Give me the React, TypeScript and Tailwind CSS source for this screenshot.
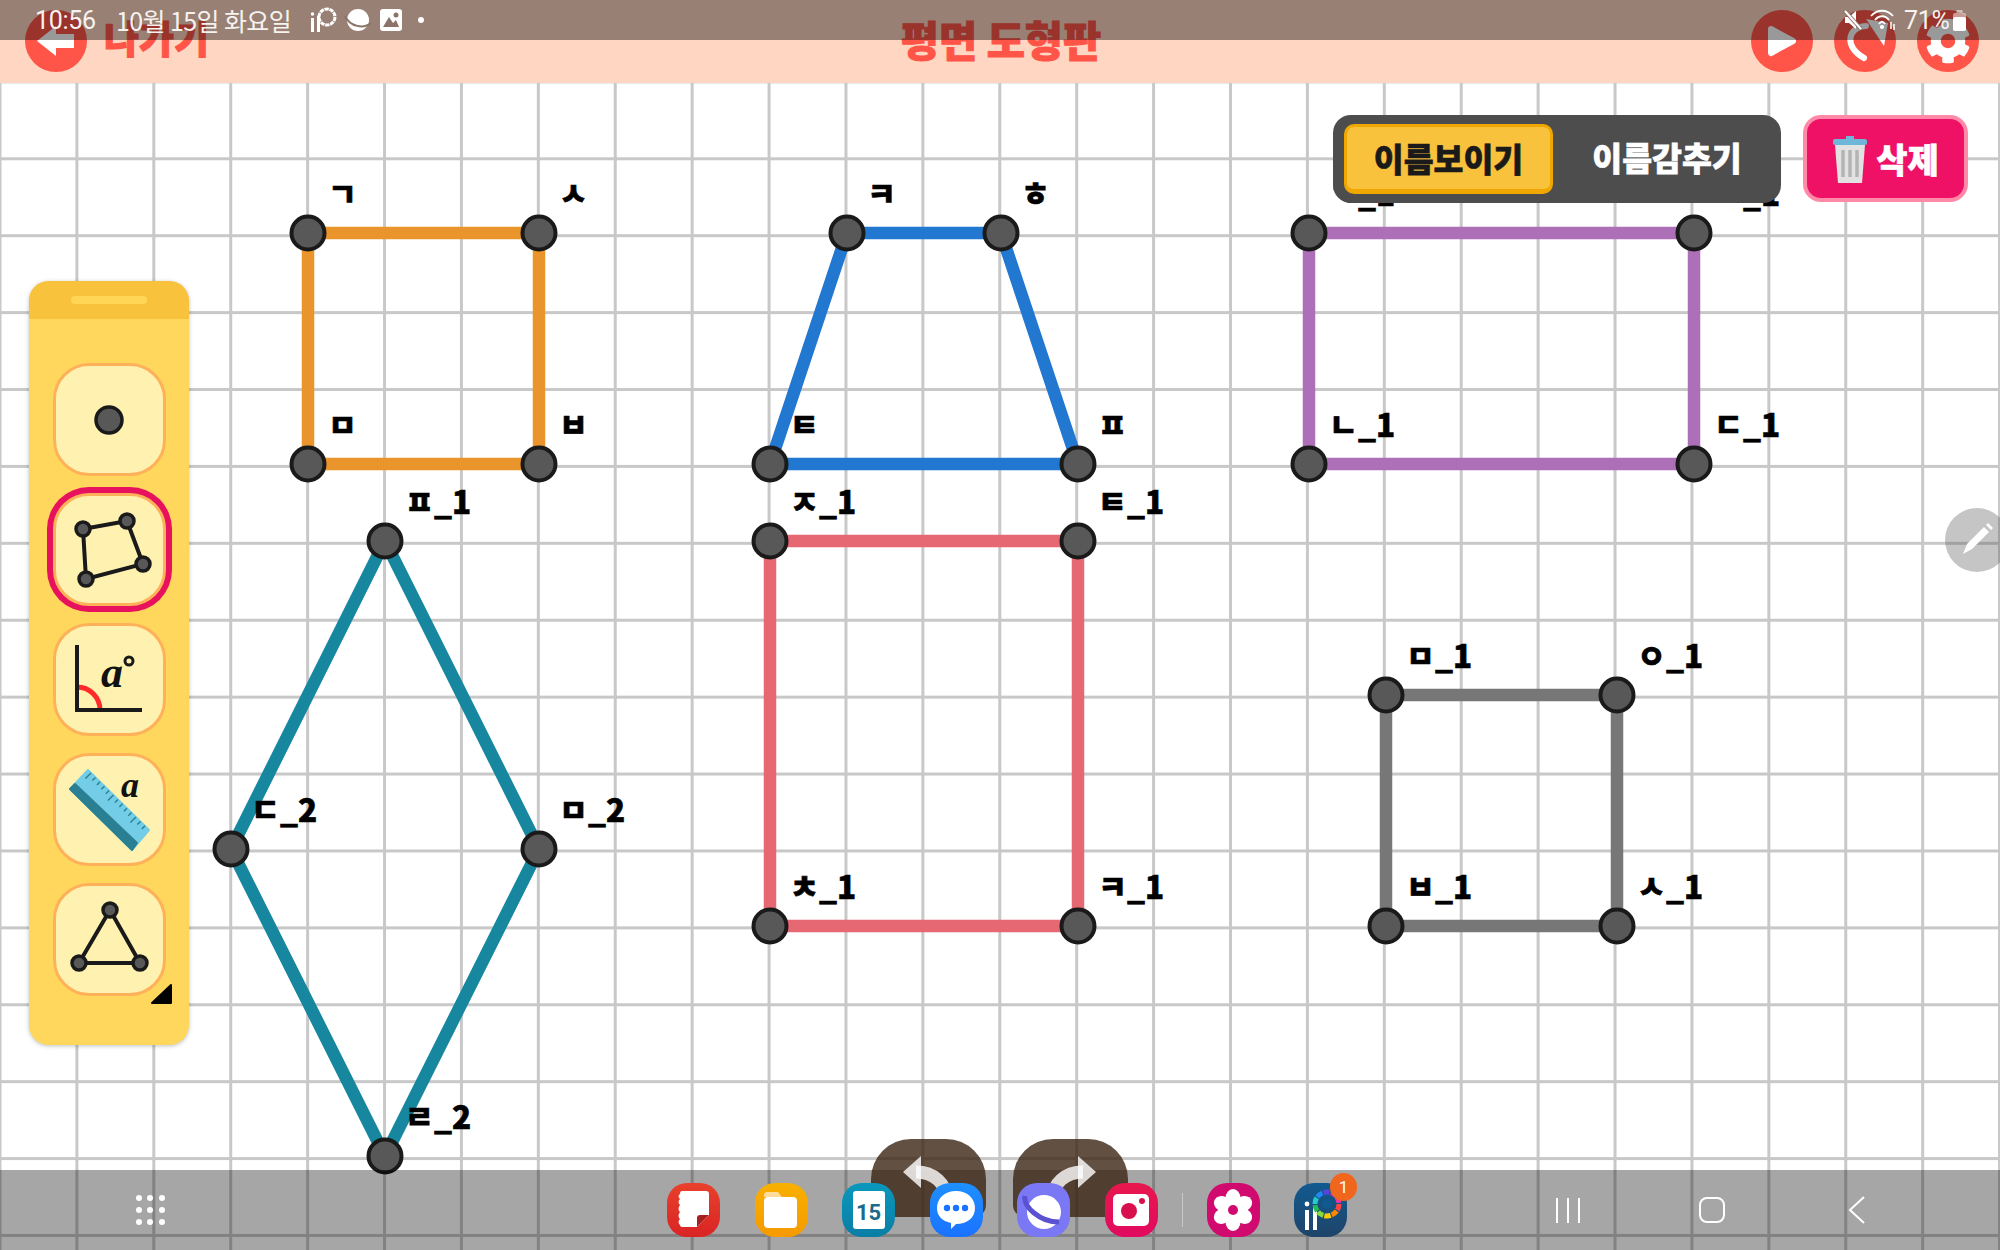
import React from "react";
import { FaCog } from "react-icons/fa";

type P = [number, number];
const shapes: { color: string; pts: P[]; names: string[] }[] = [
  { color: "#ea942c", pts: [[308, 233], [539, 233], [539, 464], [308, 464]], names: ["ㄱ", "ㅅ", "ㅂ", "ㅁ"] },
  { color: "#2277d0", pts: [[847, 233], [1001, 233], [1078, 464], [770, 464]], names: ["ㅋ", "ㅎ", "ㅍ", "ㅌ"] },
  { color: "#ae6fb9", pts: [[1309, 233], [1694, 233], [1694, 464], [1309, 464]], names: ["ㄱ_1", "ㄹ_1", "ㄷ_1", "ㄴ_1"] },
  { color: "#16879f", pts: [[385, 541], [539, 849], [385, 1156], [231, 849]], names: ["ㅍ_1", "ㅁ_2", "ㄹ_2", "ㄷ_2"] },
  { color: "#e56873", pts: [[770, 541], [1078, 541], [1078, 926], [770, 926]], names: ["ㅈ_1", "ㅌ_1", "ㅋ_1", "ㅊ_1"] },
  { color: "#777777", pts: [[1386, 695], [1617, 695], [1617, 926], [1386, 926]], names: ["ㅁ_1", "ㅇ_1", "ㅅ_1", "ㅂ_1"] },
];

function Node({ x, y, r = 16.5, w = 4 }: { x: number; y: number; r?: number; w?: number }) {
  return <circle cx={x} cy={y} r={r} fill="#585858" stroke="#1a1a1a" strokeWidth={w} />;
}

function ToolShape({ pts }: { pts: P[] }) {
  return (
    <svg width="113" height="113" viewBox="0 0 113 113" className="block shrink-0">
      <polygon points={pts.map((p) => p.join(",")).join(" ")} fill="none" stroke="#1a1a1a" strokeWidth="4" />
      {pts.map((p, i) => (
        <Node key={i} x={p[0]} y={p[1]} r={7} w={3.5} />
      ))}
    </svg>
  );
}

function AngleIcon() {
  return (
    <svg width="113" height="113" viewBox="0 0 113 113" className="block shrink-0">
      <path d="M24 64 A23 23 0 0 1 47 87" fill="none" stroke="#ff2a2a" strokeWidth="5" />
      <path d="M24 22 V87 H89" fill="none" stroke="#1a1a1a" strokeWidth="4" />
      <text x="48" y="64" fontFamily="Liberation Serif, serif" fontStyle="italic" fontWeight="700" fontSize="44" fill="#111">a</text>
      <circle cx="76" cy="38" r="4" fill="none" stroke="#1a1a1a" strokeWidth="3" />
    </svg>
  );
}

function RulerIcon() {
  const ticks = Array.from({ length: 13 }, (_, i) => i);
  return (
    <svg width="113" height="113" viewBox="0 0 113 113" className="block shrink-0">
      <polygon points="17,36 35,17 96,77 79,97" fill="#74cde6" stroke="#74cde6" strokeWidth="2" strokeLinejoin="round" />
      <polygon points="17,36 22,31 84,90 79,97" fill="#2a7f92" stroke="#2a7f92" strokeWidth="2" strokeLinejoin="round" />
      {ticks.map((i) => {
        const x = 38 + i * 4.5;
        const y = 20 + i * 4.4;
        const l = i % 5 === 0 ? 8 : 4.5;
        return <line key={i} x1={x} y1={y} x2={x - l * 0.7} y2={y + l * 0.7} stroke="#2a7f92" strokeWidth="1.4" />;
      })}
      <text x="68" y="44" fontFamily="Liberation Serif, serif" fontStyle="italic" fontWeight="700" fontSize="36" fill="#111">a</text>
    </svg>
  );
}

function Tool({ children, active = false }: { children: React.ReactNode; active?: boolean }) {
  return (
    <div
      className={
        "w-[113px] h-[113px] rounded-[36px] border-[3px] border-[#ffb15a] bg-[#fff2b0] flex items-center justify-center box-border overflow-visible " +
        (active ? "ring-[6px] ring-[#e8115e]" : "")
      }
    >
      {children}
    </div>
  );
}

function Round({ children }: { children: React.ReactNode }) {
  return <div className="w-[62px] h-[62px] rounded-full bg-[#ff5548] flex items-center justify-center">{children}</div>;
}

function AppIcon({ className, children }: { className: string; children: React.ReactNode }) {
  return (
    <div className={"relative z-20 w-[53px] h-[54px] rounded-[20px] flex items-center justify-center shrink-0 " + className}>
      {children}
    </div>
  );
}

function Wheel({ cx, cy, r, w, white = false }: { cx: number; cy: number; r: number; w: number; white?: boolean }) {
  const cols = ["#f44", "#f80", "#fc0", "#8d3", "#2b5", "#2cc", "#28e", "#54d", "#a3c", "#e3a"];
  return (
    <g>
      {cols.map((c, i) => {
        const a = (i / cols.length) * Math.PI * 2;
        const b = ((i + 0.85) / cols.length) * Math.PI * 2;
        return (
          <path
            key={i}
            d={`M${cx + r * Math.cos(a)} ${cy + r * Math.sin(a)} A${r} ${r} 0 0 1 ${cx + r * Math.cos(b)} ${cy + r * Math.sin(b)}`}
            fill="none"
            stroke={white ? "#fff" : c}
            strokeWidth={w}
          />
        );
      })}
    </g>
  );
}

export default function App() {
  const font = "font-['Noto_Sans_CJK_KR','Noto_Sans',sans-serif]";
  return (
    <div className={"relative w-[2000px] h-[1250px] overflow-hidden flex flex-col bg-white " + font}>
      <header className="h-[83px] bg-[#ffd6c2] flex items-start justify-between pl-[25px] pr-[21px] pt-[10px] shrink-0">
        <div className="w-[400px] flex items-center gap-[17px]">
          <Round>
            <svg width="38" height="30" viewBox="0 0 38 30">
              <polygon points="0,15 19,0 19,8 37,8 37,22 19,22 19,30" fill="#fff" />
            </svg>
          </Round>
          <span className="text-[38px] leading-none font-black text-[#ff5548] -mt-[8px] [-webkit-text-stroke:1px_#ff5548]">나가기</span>
        </div>
        <div className="text-[41.5px] leading-none font-black text-[#ff5548] pt-[9px] pr-[2px] [-webkit-text-stroke:1px_#ff5548]">평면 도형판</div>
        <div className="w-[400px] flex justify-end gap-[21px]">
          <Round>
            <svg width="30" height="32" viewBox="0 0 30 32">
              <path d="M4 4 L26 16 L4 28 Z" fill="#fff" stroke="#fff" strokeWidth="6" strokeLinejoin="round" />
            </svg>
          </Round>
          <Round>
            <svg width="48" height="48" viewBox="0 0 48 48">
              <path d="M23 41 C3 30 6 10 25 9" fill="none" stroke="#fff" strokeWidth="6" strokeLinecap="round" />
              <polygon points="25,2 47,6 43,29" fill="#fff" />
            </svg>
          </Round>
          <Round>
            <FaCog className="text-white" size={46} />
          </Round>
        </div>
      </header>

      <main className="relative flex-1 bg-white bg-[linear-gradient(to_right,#c8c8c8_3px,transparent_3px),linear-gradient(to_bottom,#c8c8c8_3px,transparent_3px)] bg-size-[76.92px_76.92px] bg-position-[-1.5px_74.3px]">
        <svg className="absolute left-0 top-0" width="2000" height="1167" viewBox="0 83 2000 1167">
          {shapes.map((s, i) => (
            <g key={i}>
              <polygon points={s.pts.map((p) => p.join(",")).join(" ")} fill="none" stroke={s.color} strokeWidth="12.5" />
              {s.pts.map((p, j) => (
                <Node key={j} x={p[0]} y={p[1]} />
              ))}
            </g>
          ))}
        </svg>
        {shapes.flatMap((s, i) =>
          s.pts.map((p, j) => (
            <div
              key={i + "-" + j}
              className="absolute text-[31.5px] leading-none font-black text-black whitespace-nowrap [-webkit-text-stroke:0.6px_#000]"
              style={{ left: p[0] + 20, top: p[1] - 83 - 56 }}
            >
              {s.names[j]}
            </div>
          ))
        )}

        {/* side tool panel */}
        <aside className="absolute left-[29px] top-[198px] w-[160px] h-[764px] rounded-[20px] bg-[#ffd75c] shadow-[0_1px_4px_rgba(0,0,0,0.25)] flex flex-col items-center overflow-hidden">
          <div className="w-full h-[38px] bg-[#f9c23c] flex items-center justify-center shrink-0">
            <div className="w-[76px] h-[8px] rounded-full bg-[#ffd656]" />
          </div>
          <div className="relative flex flex-col gap-[17px] pt-[44px]">
            <Tool>
              <svg width="32" height="32" viewBox="0 0 32 32">
                <Node x={16} y={16} r={13} w={3.5} />
              </svg>
            </Tool>
            <Tool active>
              <ToolShape pts={[[30, 36], [74, 28], [90, 71], [33, 86]]} />
            </Tool>
            <Tool>
              <AngleIcon />
            </Tool>
            <Tool>
              <RulerIcon />
            </Tool>
            <Tool>
              <ToolShape pts={[[57, 27], [26, 80], [87, 80]]} />
            </Tool>
            <svg className="absolute left-[98px] top-[664px]" width="22" height="22" viewBox="0 0 22 22">
              <path d="M1 20 L20 2 V20 Z" fill="#000" stroke="#000" strokeWidth="2" strokeLinejoin="round" />
            </svg>
          </div>
        </aside>

        {/* name toggle + delete */}
        <div className="absolute left-[1333px] top-[32px] flex gap-[22px]">
          <div className="w-[448px] h-[88px] rounded-[18px] bg-[#4d4d4d] flex items-center pl-[11px]">
            <div className="w-[209px] h-[70px] rounded-[10px] bg-[#f9c23c] border-[3px] border-b-[5px] border-[#f0a800] flex items-center justify-center text-[32.5px] font-black text-[#1a1a1a] leading-none whitespace-nowrap [-webkit-text-stroke:0.6px_#1a1a1a]">
              이름보이기
            </div>
            <div className="flex-1 flex items-center justify-center text-[32.5px] font-black text-white leading-none pb-[4px] whitespace-nowrap [-webkit-text-stroke:0.6px_#fff]">
              이름감추기
            </div>
          </div>
          <div className="w-[165px] h-[87px] rounded-[18px] bg-[#ee1166] border-[4px] border-[#ff8aa8] flex items-center justify-center gap-[8px] text-[34px] font-black text-white leading-none box-border whitespace-nowrap [-webkit-text-stroke:0.6px_#fff]">
            <svg width="36" height="48" viewBox="0 0 34 48">
              <path d="M13 1 h8 v4 h-8 z" fill="#6fb7d9" />
              <rect x="0" y="4" width="34" height="6" rx="2" fill="#6fb7d9" />
              <path d="M2 10 H32 L29 48 H5 Z" fill="#e2e2e2" />
              <path d="M10 15 V42 M17 15 V42 M24 15 V42" stroke="#b4b4b4" strokeWidth="3.5" />
            </svg>
            <span>삭제</span>
          </div>
        </div>

        {/* pencil */}
        <div className="absolute left-[1945px] top-[425px] w-[64px] h-[64px] rounded-full bg-[#5a5a5a]/35 flex items-center justify-start pl-[15px]">
          <svg width="34" height="34" viewBox="0 0 34 34">
            <path d="M3 31 L7 21 L24 4 L29 9 L12 26 Z" fill="#fff" />
            <path d="M26 2 L28 0 L33 5 L31 7 Z" fill="#fff" />
          </svg>
        </div>

        {/* undo / redo */}
        <div className="absolute z-10 left-[871px] top-[1056px] flex gap-[27px]">
          <div className="w-[115px] h-[78px] rounded-t-[40px] rounded-b-[12px] bg-[#3b2413]/80">
            <svg width="115" height="78" viewBox="0 0 115 78">
              <path d="M45 33 C62 33 76 44 76 62" fill="none" stroke="#fff" strokeOpacity="0.8" strokeWidth="13" />
              <polygon points="32,33 50,17 50,49" fill="#fff" fillOpacity="0.8" />
            </svg>
          </div>
          <div className="w-[115px] h-[78px] rounded-t-[40px] rounded-b-[12px] bg-[#3b2413]/80">
            <svg width="115" height="78" viewBox="0 0 115 78">
              <path d="M70 33 C53 33 39 44 39 62" fill="none" stroke="#fff" strokeOpacity="0.8" strokeWidth="13" />
              <polygon points="83,33 65,17 65,49" fill="#fff" fillOpacity="0.8" />
            </svg>
          </div>
        </div>
      </main>

      {/* status bar */}
      <div className="absolute left-0 right-0 top-0 h-[40px] bg-black/40 flex items-center justify-between pl-[35px] pr-[34px] text-[#f6f2ef] text-[23px] leading-none font-normal">
        <div className="flex items-center">
          <span className="w-[81px] font-['Roboto',sans-serif] text-[25px] tracking-[-0.3px]">10:56</span>
          <span className="w-[195px] whitespace-nowrap text-[25px] tracking-[-0.6px]">10월 15일 화요일</span>
          <svg width="27" height="26" viewBox="0 0 27 26" className="mr-[6px]">
            <rect x="0" y="11" width="3" height="14" fill="#fff" />
            <circle cx="1.5" cy="7" r="1.7" fill="#fff" />
            <rect x="6" y="9" width="3" height="16" fill="#fff" />
            <Wheel cx={16} cy={10} r={8} w={3} white />
          </svg>
          <svg width="28" height="26" viewBox="0 0 28 26" className="mr-[8px]">
            <ellipse cx="14" cy="13" rx="11" ry="11" fill="#fff" />
            <path d="M1 9 C6 20 20 22 27 16" fill="none" stroke="#8b7467" strokeWidth="2" />
          </svg>
          <svg width="22" height="24" viewBox="0 0 22 24" className="mr-[16px]">
            <rect x="0" y="1" width="22" height="22" rx="3" fill="#fff" />
            <circle cx="16" cy="7" r="2.5" fill="#8b7467" />
            <path d="M3 19 L9 9 L13 15 L16 12 L19 19 Z" fill="#8b7467" />
          </svg>
          <span className="w-[6px] h-[6px] rounded-full bg-white" />
        </div>
        <div className="flex items-center">
          <svg width="20" height="20" viewBox="0 0 20 20" className="mr-[7px]">
            <path d="M2 7 H6 L13 1 V19 L6 13 H2 Z" fill="#fff" />
            <path d="M2 1 L18 19" stroke="#8b7467" strokeWidth="4" />
            <path d="M2 1 L18 19" stroke="#fff" strokeWidth="2" />
          </svg>
          <svg width="26" height="22" viewBox="0 0 26 22" fill="none" stroke="#fff" strokeWidth="1.8" className="mr-[8px]">
            <path d="M1 7 C7 0 17 0 23 7" />
            <path d="M5 11 C9 6 15 6 19 11" />
            <path d="M9 15 C11 12 13 12 15 15" />
            <circle cx="12" cy="18" r="1.2" fill="#fff" />
            <path d="M21 13 V20 M24 15 V21" strokeWidth="1.5" />
          </svg>
          <span className="font-['Roboto',sans-serif] text-[25px] w-[49px] tracking-[-0.3px]">71%</span>
          <svg width="13" height="21" viewBox="0 0 13 21">
            <rect x="3.5" y="0" width="6" height="3" fill="#fff" fillOpacity="0.5" />
            <rect x="0" y="3" width="13" height="18" rx="2" fill="#fff" fillOpacity="0.5" />
            <rect x="0" y="7" width="13" height="14" rx="2" fill="#fff" />
          </svg>
        </div>
      </div>

      {/* dock */}
      <div className="absolute left-0 right-0 bottom-0 h-[80px] bg-black/35 flex items-center pl-[136px]">
        <div className="grid grid-cols-3 gap-[6px] w-[28px] shrink-0">
          {Array.from({ length: 9 }).map((_, i) => (
            <span key={i} className="w-[6px] h-[6px] rounded-full bg-white" />
          ))}
        </div>
        <div className="ml-[503px] flex items-center gap-[34.5px]">
          <AppIcon className="bg-[linear-gradient(#e8412c,#d92424)]">
            <svg width="34" height="38" viewBox="0 0 34 38">
              <path d="M5 0 H29 Q32 0 32 3 V24 L20 36 H5 Q3 36 3 34 Q0 31 3 28 Q0 25 3 21 Q0 18 3 14 Q0 11 3 8 Q0 5 3 3 Q3 0 5 0Z" fill="#fff" />
              <path d="M20 36 V27 Q20 24 23 24 H32 Z" fill="#a81f22" />
            </svg>
          </AppIcon>
          <AppIcon className="bg-[linear-gradient(#f8b000,#f69a00)]">
            <svg width="34" height="36" viewBox="0 0 34 36">
              <path d="M0 3 Q0 0 3 0 H14 L18 5 H0Z" fill="#ffdc9a" />
              <rect x="0" y="5" width="33" height="31" rx="4" fill="#fff" />
            </svg>
          </AppIcon>
          <AppIcon className="bg-[linear-gradient(#0a97bd,#0a7ea5)]">
            <div className="relative w-[32px] h-[38px] bg-white rounded-[3px] flex items-center justify-center text-[22px] leading-none font-bold text-[#1a6a8c] pt-[6px] font-['Roboto',sans-serif]">
              15
            </div>
          </AppIcon>
          <AppIcon className="bg-[linear-gradient(#1e90ff,#1a72ff)]">
            <svg width="40" height="40" viewBox="0 0 40 40">
              <path d="M20 1 C31 1 39 8 39 18 C39 28 31 34 20 34 L15 39 V33 C6 31 1 26 1 18 C1 8 9 1 20 1Z" fill="#fff" />
              <circle cx="11" cy="18" r="3.2" fill="#1a72ff" />
              <circle cx="20" cy="18" r="3.2" fill="#1a72ff" />
              <circle cx="29" cy="18" r="3.2" fill="#1a72ff" />
            </svg>
          </AppIcon>
          <AppIcon className="bg-[#7a78f5]">
            <svg width="46" height="44" viewBox="0 0 46 44">
              <circle cx="23" cy="24" r="17" fill="#fff" />
              <path d="M4 8 C2 18 18 34 38 34" fill="none" stroke="#5a52d0" strokeWidth="5" />
            </svg>
          </AppIcon>
          <AppIcon className="bg-[linear-gradient(#e8184e,#e00a60)]">
            <svg width="36" height="32" viewBox="0 0 36 32">
              <rect x="0" y="0" width="36" height="32" rx="5" fill="#fff" />
              <circle cx="16" cy="17" r="8" fill="#d8104e" />
              <circle cx="29" cy="7" r="3" fill="#d8104e" />
            </svg>
          </AppIcon>
          <span className="relative z-20 w-px h-[34px] bg-white/40 -ml-[10px] -mr-[8px]" />
          <AppIcon className="bg-[#d00a6e] -ml-[3px]">
            <svg width="40" height="42" viewBox="0 0 40 42">
              {[0, 60, 120, 180, 240, 300].map((a) => (
                <ellipse key={a} cx="20" cy="9" rx="7.5" ry="9" fill="#fff" transform={`rotate(${a} 20 21)`} />
              ))}
              <circle cx="20" cy="21" r="5" fill="#d00a6e" />
            </svg>
          </AppIcon>
          <AppIcon className="bg-[linear-gradient(#115a90,#1f4468)]">
            <svg width="46" height="44" viewBox="0 0 46 44">
              <rect x="7" y="22" width="4" height="20" fill="#fff" />
              <circle cx="9" cy="16" r="2.4" fill="#fff" />
              <rect x="15" y="18" width="4" height="24" fill="#fff" />
              <Wheel cx={29} cy={16} r={12} w={5} />
              <circle cx="29" cy="16" r="5" fill="#115a90" />
            </svg>
            <span className="absolute -right-[10px] -top-[10px] w-[27px] h-[28px] rounded-full bg-[#f0661c] text-white text-[17px] leading-none flex items-center justify-center font-['Roboto',sans-serif]">
              1
            </span>
          </AppIcon>
        </div>
        <div className="ml-[209px] flex items-center gap-[9px] h-[26px]">
          <span className="w-[2px] h-[25px] bg-white" />
          <span className="w-[2px] h-[25px] bg-white" />
          <span className="w-[2px] h-[25px] bg-white" />
        </div>
        <div className="ml-[119px] w-[26px] h-[26px] rounded-[8px] border-2 border-white" />
        <svg className="ml-[123px]" width="17" height="28" viewBox="0 0 17 28" fill="none" stroke="#fff" strokeWidth="2">
          <path d="M16 1 L2 14 L16 27" />
        </svg>
      </div>
    </div>
  );
}
